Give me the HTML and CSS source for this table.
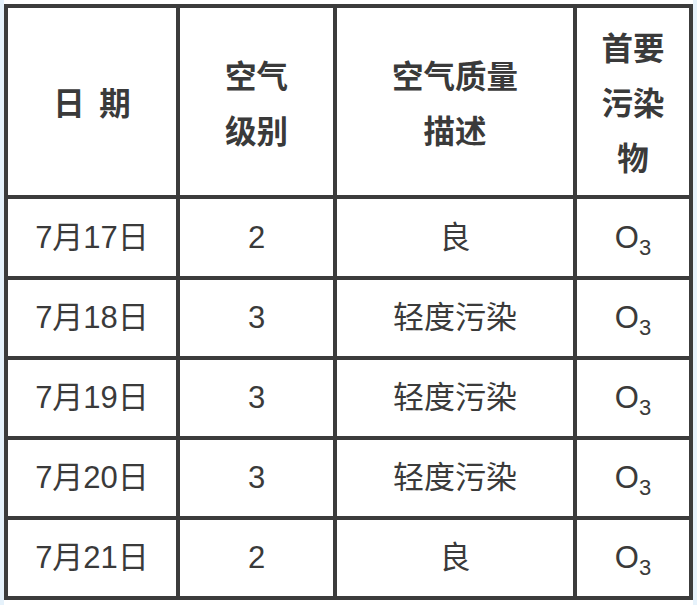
FILE: index.html
```html
<!DOCTYPE html>
<html lang="zh-CN">
<head>
<meta charset="utf-8">
<title>空气质量</title>
<link rel="stylesheet" href="styles.css">
</head>
<body>
<div class="page">
  <table class="aq">
    <thead>
      <tr>
        <th class="c1">日&nbsp;&nbsp;期</th>
        <th class="c2">空气<br>级别</th>
        <th class="c3">空气质量<br>描述</th>
        <th class="c4">首要<br>污染<br>物</th>
      </tr>
    </thead>
    <tbody>
      <tr><td>7月17日</td><td>2</td><td>良</td><td>O<sub>3</sub></td></tr>
      <tr><td>7月18日</td><td>3</td><td>轻度污染</td><td>O<sub>3</sub></td></tr>
      <tr><td>7月19日</td><td>3</td><td>轻度污染</td><td>O<sub>3</sub></td></tr>
      <tr><td>7月20日</td><td>3</td><td>轻度污染</td><td>O<sub>3</sub></td></tr>
      <tr><td>7月21日</td><td>2</td><td>良</td><td>O<sub>3</sub></td></tr>
    </tbody>
  </table>
</div>
</body>
</html>
```

FILE: styles.css
```css
html, body {
  margin: 0;
  padding: 0;
  background: #ffffff;
}

.page {
  width: 689px;
  padding: 4px 0 5px;
  border-left: 4px solid #e6f2fb;
  border-right: 4px solid #e6f2fb;
}

.aq {
  border-collapse: separate;
  border-spacing: 0;
  table-layout: fixed;
  border-top: 4px solid #3c3c3c;
  border-left: 4px solid #3c3c3c;
  font-family: "Liberation Sans", "Noto Sans CJK SC", sans-serif;
  color: #3a3a3a;
}

.aq th,
.aq td {
  padding: 0;
  border-right: 4px solid #3c3c3c;
  border-bottom: 4px solid #3c3c3c;
  text-align: center;
  vertical-align: middle;
}

.aq th {
  height: 187px;
  font-family: "Noto Sans CJK SC", sans-serif;
  font-weight: bold;
  font-size: 31.5px;
  line-height: 55px;
  color: #3a3a3a;
}

.aq .c1 { width: 168px; }
.aq .c2 { width: 153px; }
.aq .c3 { width: 236px; }
.aq .c4 { width: 112px; }

.aq td {
  height: 76px;
  font-size: 31px;
  font-weight: normal;
  line-height: 40px;
}

.aq tbody tr:first-child td {
  height: 77px;
}

.aq sub {
  font-size: 22px;
  line-height: 0;
  vertical-align: -7px;
}
```
